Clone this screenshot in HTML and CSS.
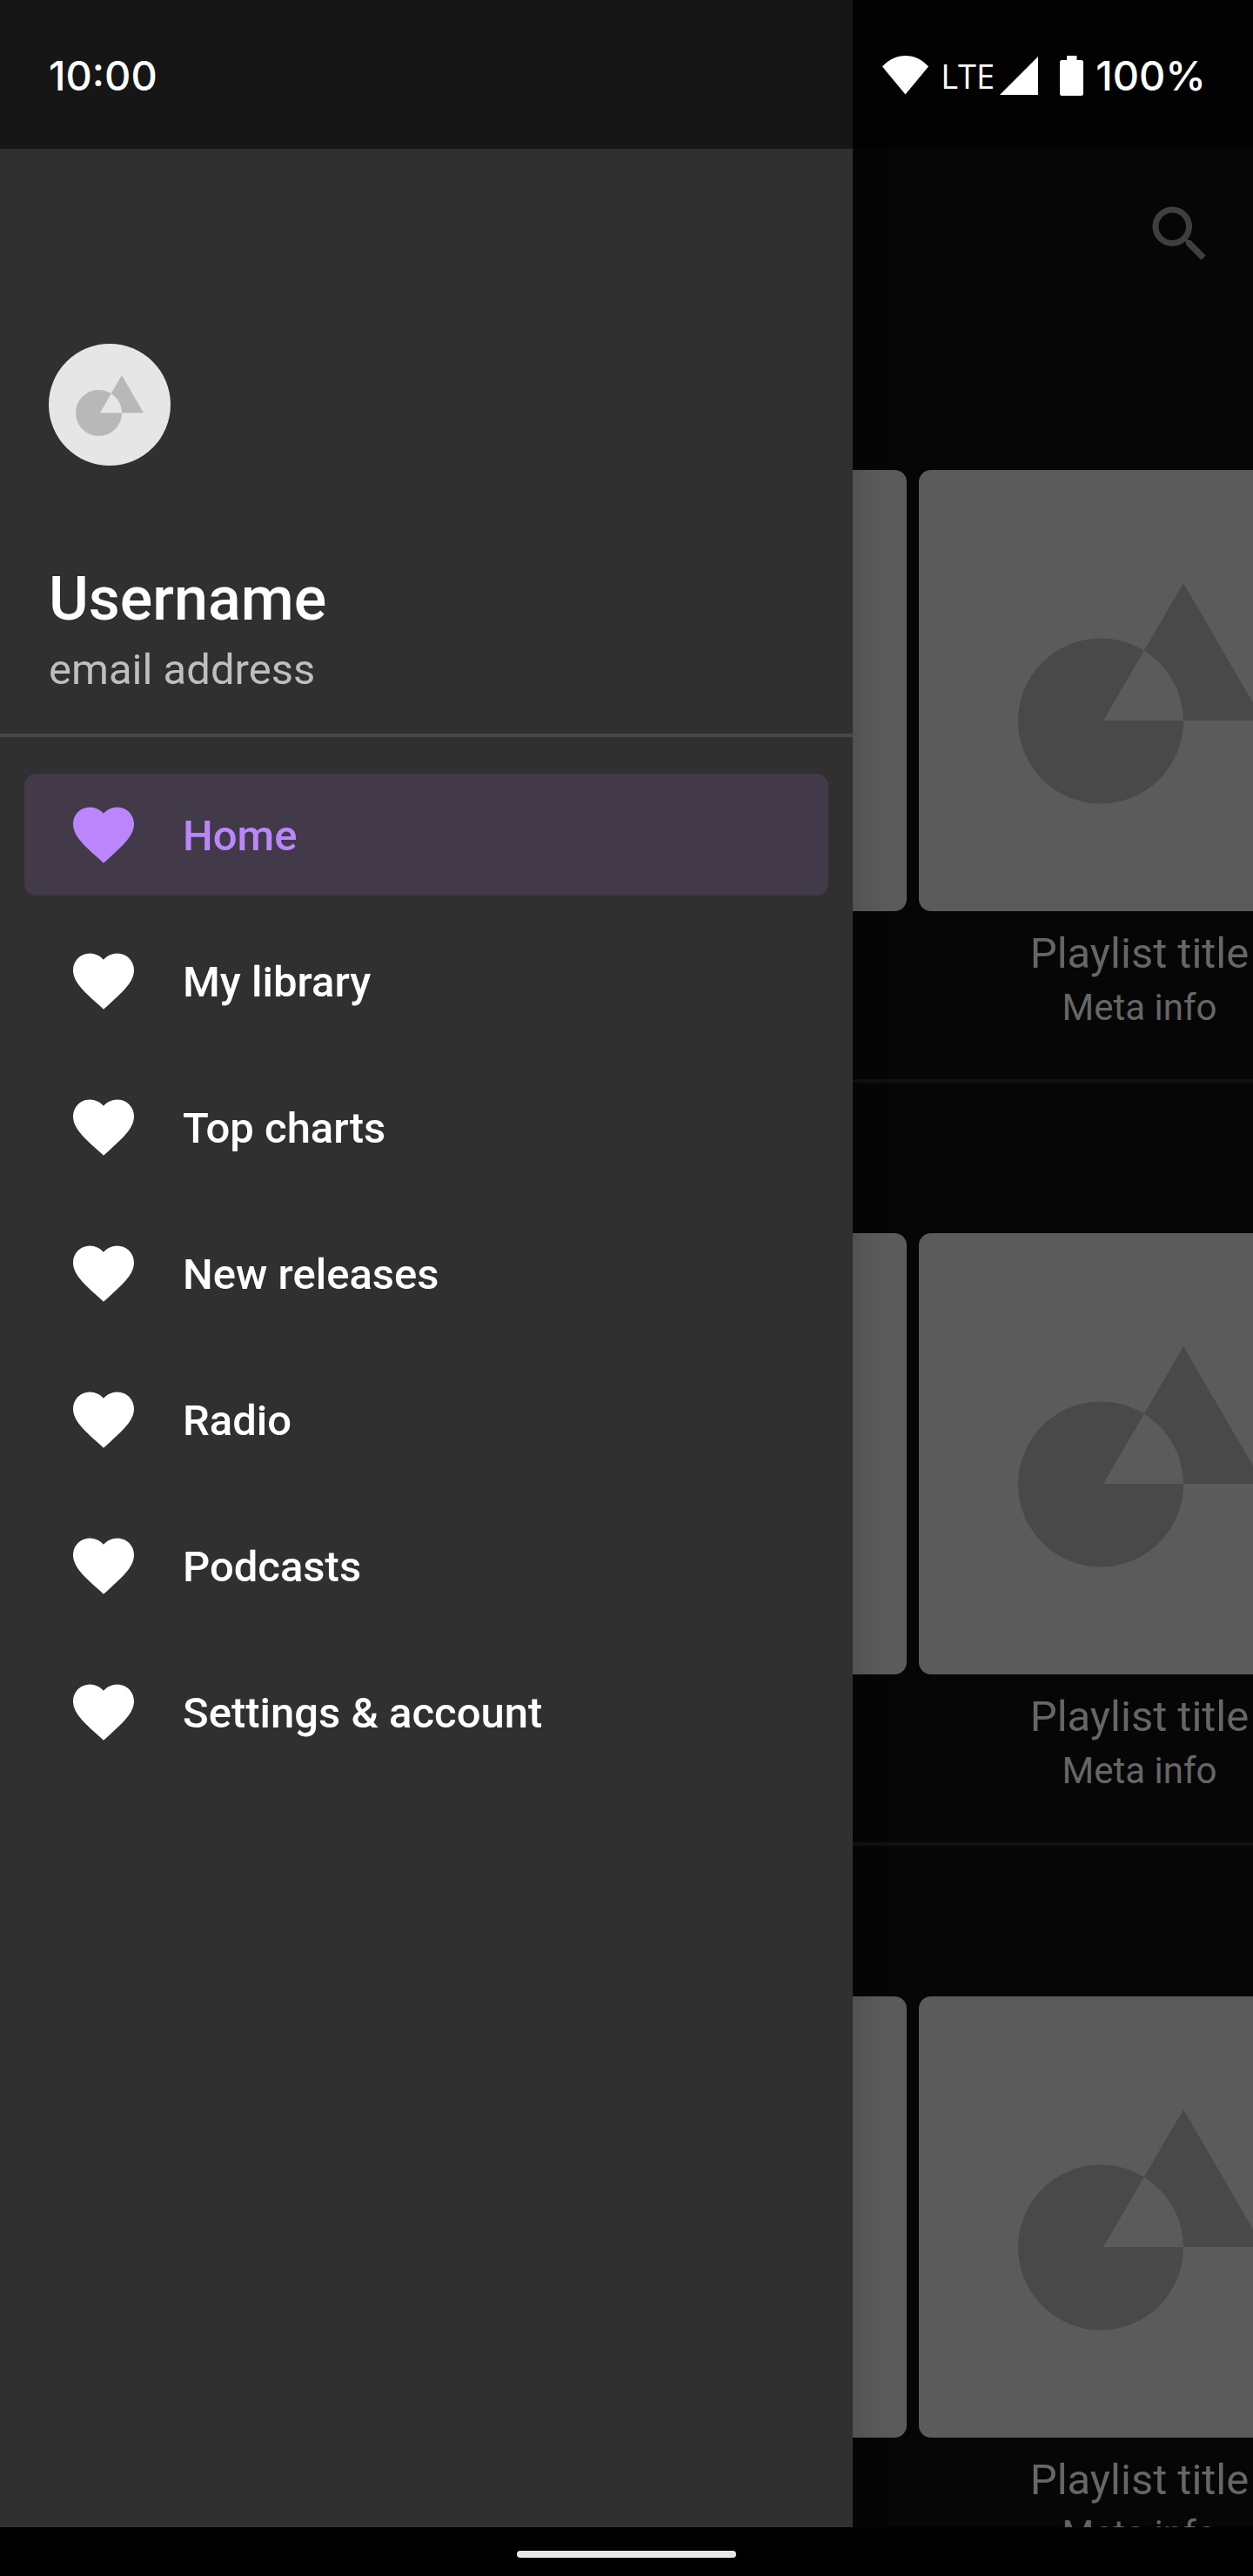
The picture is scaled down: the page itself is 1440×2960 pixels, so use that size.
FILE: index.html
```html
<!DOCTYPE html>
<html lang="en">
<head>
<meta charset="utf-8">
<meta name="viewport" content="width=device-width, initial-scale=1">
<title>Music</title>
<link rel="stylesheet" href="styles.css">
</head>
<body>
<svg class="sprite" aria-hidden="true">
  <symbol id="heart" viewBox="0 0 24 24"><path d="M12 21.35l-1.45-1.32C5.4 15.36 2 12.28 2 8.5 2 5.42 4.42 3 7.5 3c1.74 0 3.41.81 4.5 2.09C13.09 3.81 14.76 3 16.5 3 19.58 3 22 5.42 22 8.5c0 3.78-3.4 6.86-8.55 11.54L12 21.35z"/></symbol>
  <symbol id="artwork" viewBox="0 0 507 507"><path fill-rule="evenodd" d="M114 288.500a95 95 0 1 1 190 0a95 95 0 1 1 -190 0zM304 130L396 288H212z"/></symbol>
</svg>
<div class="screen">
  <main class="content">
    <header class="app-bar">
      <button class="icon-button" type="button" aria-label="Search">
        <svg class="icon" viewBox="0 0 24 24"><path d="M15.500 14h-.79l-.28-.27A6.471 6.471 0 0 0 16 9.500 6.500 6.500 0 1 0 9.500 16c1.610 0 3.090-.59 4.230-1.570l.27.28v.79l5 4.990L20.490 19l-4.990-5zm-6 0C7.010 14 5 11.990 5 9.500S7.010 5 9.500 5 14 7.010 14 9.500 11.990 14 9.500 14z"/></svg>
      </button>
    </header>
    <section class="shelf">
      <div class="card"><div class="cover"></div></div>
      <div class="card"><div class="cover"></div></div>
      <div class="card">
        <svg class="cover"><use href="#artwork"/></svg>
        <h2 class="card-title">Playlist title</h2>
        <p class="card-meta">Meta info</p>
      </div>
    </section>
    <section class="shelf">
      <div class="card"><div class="cover"></div></div>
      <div class="card"><div class="cover"></div></div>
      <div class="card">
        <svg class="cover"><use href="#artwork"/></svg>
        <h2 class="card-title">Playlist title</h2>
        <p class="card-meta">Meta info</p>
      </div>
    </section>
    <section class="shelf">
      <div class="card"><div class="cover"></div></div>
      <div class="card"><div class="cover"></div></div>
      <div class="card">
        <svg class="cover"><use href="#artwork"/></svg>
        <h2 class="card-title">Playlist title</h2>
        <p class="card-meta">Meta info</p>
      </div>
    </section>
  </main>

  <aside class="drawer">
    <div class="profile">
      <svg class="avatar" viewBox="0 0 140 140"><path fill-rule="evenodd" d="M31 79.500a26.500 26.500 0 1 1 53 0a26.500 26.500 0 1 1 -53 0zM84 36L109 79.500H59z"/></svg>
      <h1 class="username">Username</h1>
      <p class="email">email address</p>
    </div>
    <nav class="menu">
      <a class="menu-item active" href="#home" aria-current="page"><svg class="icon"><use href="#heart"/></svg><span class="menu-label">Home</span></a>
      <a class="menu-item" href="#library"><svg class="icon"><use href="#heart"/></svg><span class="menu-label">My library</span></a>
      <a class="menu-item" href="#charts"><svg class="icon"><use href="#heart"/></svg><span class="menu-label">Top charts</span></a>
      <a class="menu-item" href="#releases"><svg class="icon"><use href="#heart"/></svg><span class="menu-label">New releases</span></a>
      <a class="menu-item" href="#radio"><svg class="icon"><use href="#heart"/></svg><span class="menu-label">Radio</span></a>
      <a class="menu-item" href="#podcasts"><svg class="icon"><use href="#heart"/></svg><span class="menu-label">Podcasts</span></a>
      <a class="menu-item" href="#settings"><svg class="icon"><use href="#heart"/></svg><span class="menu-label">Settings &amp; account</span></a>
    </nav>
  </aside>

  <div class="status-bar">
    <span class="clock">10:00</span>
    <svg class="wifi" viewBox="0 0 53 45"><path d="M0 12.500C7 4.500 16.500 0 26.500 0S46 4.500 53 12.500L26.500 44.500z"/></svg>
    <span class="network">LTE</span>
    <svg class="signal" viewBox="0 0 44 44"><path d="M0 44L44 0V44z"/></svg>
    <svg class="battery" viewBox="0 0 27 46"><path d="M8 0H19.500V5H24.500Q27 5 27 7.500V43.500Q27 46 24.500 46H2.500Q0 46 0 43.500V7.500Q0 5 2.500 5H8z"/></svg>
    <span class="charge">100%</span>
  </div>

  <footer class="gesture-bar"><div class="handle"></div></footer>
</div>
</body>
</html>
```
FILE: styles.css
```css
* { box-sizing: border-box; }

body {
  margin: 0;
  background: #000;
  color: #fff;
  font-family: Roboto, "Liberation Sans", sans-serif;
}

h1, h2, p { margin: 0; }

.sprite { display: none; }

.screen {
  display: grid;
  grid-template: minmax(0, 1fr) 56px / minmax(0, 1fr);
  height: 100vh;
}

.content, .drawer, .status-bar { grid-area: 1 / 1; }

.icon {
  flex: none;
  display: block;
  width: 84px;
  height: 84px;
  fill: currentColor;
}

/* Dimmed page behind the drawer */
.content {
  overflow: hidden;
  padding-top: 171px;
  background: #060606;
}

.app-bar {
  display: flex;
  justify-content: flex-end;
  padding: 56px 42px;
}

.icon-button {
  padding: 0;
  border: 0;
  background: none;
  color: #3f3f3f;
}

.shelf {
  display: flex;
  gap: 14px;
  padding: 173px 0 54px 14px;
  border-bottom: 4px solid #121212;
}

.card {
  flex: 0 0 507px;
  color: #666;
  text-align: center;
}

.cover {
  display: block;
  width: 100%;
  height: 507px;
  margin-bottom: 21px;
  border-radius: 14px;
  background: #5b5b5b;
  fill: #494949;
}

.card-title {
  margin-bottom: 6px;
  font-size: 49px;
  font-weight: 400;
  line-height: 56px;
}

.card-meta {
  font-size: 42px;
  line-height: 56px;
}

/* Drawer */
.drawer {
  z-index: 1;
  width: min(980px, 85%);
  background: #303030;
  box-shadow: 0 0 40px rgba(0, 0, 0, .2);
  overflow: hidden;
}

.profile {
  padding: 395px 56px 38px;
  border-bottom: 4px solid #484848;
}

.avatar {
  display: block;
  width: 140px;
  height: 140px;
  margin-bottom: 111px;
  border-radius: 50%;
  background: #e6e6e6;
  fill: #b8b8b8;
}

.username {
  margin-bottom: 5px;
  font-size: 70px;
  font-weight: 500;
  line-height: 84px;
}

.email {
  color: #bfbfbf;
  font-size: 49px;
  line-height: 70px;
}

.menu {
  display: flex;
  flex-direction: column;
  gap: 28px;
  padding: 42px 28px;
}

.menu-item {
  display: flex;
  align-items: center;
  gap: 49px;
  height: 140px;
  padding: 0 49px;
  border-radius: 14px;
  color: #fff;
  font-size: 49px;
  font-weight: 500;
  text-decoration: none;
}

.menu-label { padding-top: 3px; }

.menu-item.active {
  background: #423a49;
  color: #bb86fc;
}

/* System bars */
.status-bar {
  z-index: 2;
  align-self: start;
  display: flex;
  align-items: center;
  height: 171px;
  padding: 2px 54px 0 56px;
  background: rgba(0, 0, 0, .54);
  fill: #fff;
}

.clock, .charge {
  font-family: Inter, "Liberation Sans", sans-serif;
  font-size: 47px;
  font-weight: 500;
}

.clock { margin-right: auto; }

.network {
  margin: 0 6px 0 14px;
  font-family: "Open Sans", "Liberation Sans", sans-serif;
  font-size: 38px;
}

.wifi { width: 53px; height: 45px; }
.signal { width: 44px; height: 44px; }
.battery { width: 27px; height: 46px; margin: 0 14px 0 25px; }

.gesture-bar {
  display: flex;
  justify-content: center;
  padding-top: 27px;
  background: #000;
}

.handle {
  width: 252px;
  height: 8px;
  border-radius: 4px;
  background: #ebebeb;
}
```
